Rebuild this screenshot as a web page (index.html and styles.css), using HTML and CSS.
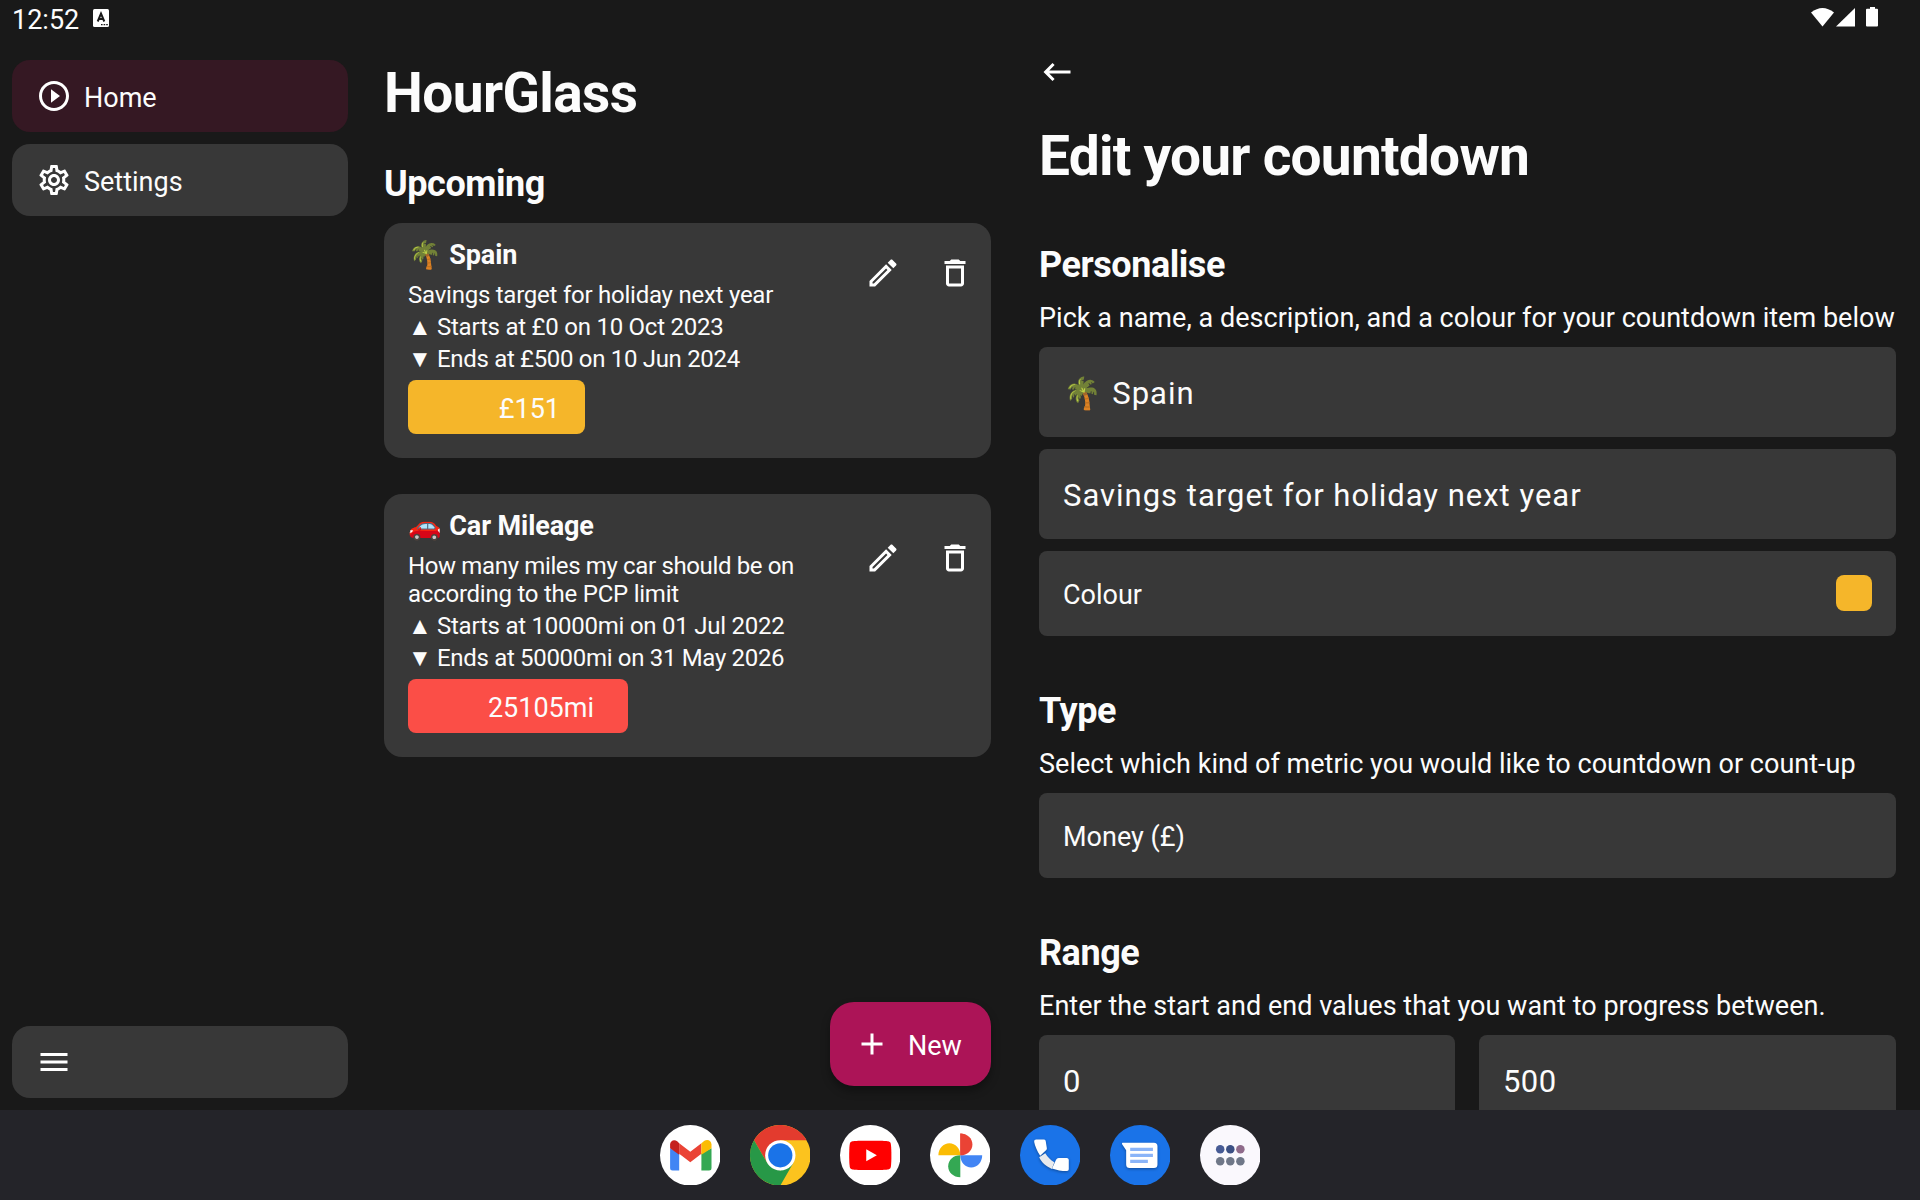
FILE: index.html
```html
<!DOCTYPE html>
<html lang="en">
<head>
<meta charset="utf-8">
<title>HourGlass</title>
<link rel="stylesheet" href="styles.css">
</head>
<body>
<div class="screen">
  <header class="status">
    <span class="clock">12:52</span>
    <svg class="status-app" width="16" height="18" viewBox="0 0 16 18"><rect width="16" height="18" rx="1.5" fill="#fff"/><path d="M4.7 12.5 8 4.600l3.300 7.900M5.800 10h4.400" fill="none" stroke="#191919" stroke-width="2"/><path d="M8 15.600h1.600m1 0h1.600m1 0h1.600" stroke="#191919" stroke-width="1.400"/></svg>
    <svg class="status-tray" width="68" height="22" viewBox="0 0 68 22" fill="#fff"><path d="M0 5.500Q11.500-3.500 23 5.500L11.500 19.500z"/><path d="M44 1v18.500H25z"/><path d="M59 0h5v1.800h2a1 1 0 0 1 1 1v15.700a1 1 0 0 1-1 1H56a1 1 0 0 1-1-1V2.800a1 1 0 0 1 1-1h3z"/></svg>
  </header>

  <div class="app">
    <nav class="sidebar">
      <a class="nav-item active"><svg class="icon" viewBox="0 0 24 24"><path d="M10 16.500l6-4.500-6-4.500v9zM12 2C6.480 2 2 6.480 2 12s4.480 10 10 10 10-4.480 10-10S17.520 2 12 2zm0 18c-4.410 0-8-3.590-8-8s3.590-8 8-8 8 3.590 8 8-3.590 8-8 8z"/></svg><span>Home</span></a>
      <a class="nav-item"><svg class="icon" viewBox="0 0 24 24"><path d="M19.430 12.980c.04-.32.07-.64.07-.98s-.03-.66-.07-.98l2.110-1.650c.19-.15.24-.42.12-.64l-2-3.460c-.09-.16-.26-.25-.44-.25-.06 0-.12.010-.17.030l-2.490 1c-.52-.4-1.080-.73-1.690-.98l-.38-2.650C14.460 2.180 14.250 2 14 2h-4c-.25 0-.46.180-.49.420l-.38 2.650c-.61.250-1.170.590-1.690.980l-2.490-1c-.06-.02-.12-.03-.18-.03-.17 0-.34.090-.43.250l-2 3.460c-.13.220-.07.490.120.640l2.110 1.650c-.04.320-.07.650-.07.980s.03.660.070.980l-2.110 1.650c-.19.150-.24.420-.12.640l2 3.460c.09.160.260.250.440.250.060 0 .120-.01.170-.03l2.490-1c.52.400 1.080.730 1.690.980l.38 2.650c.03.240.240.420.490.420h4c.25 0 .46-.18.490-.42l.38-2.650c.61-.25 1.170-.59 1.690-.98l2.490 1c.06.020.120.030.180.030.170 0 .340-.09.430-.25l2-3.460c.12-.22.070-.49-.12-.64l-2.110-1.650zm-1.980-1.710c.04.310.050.520.050.730s-.02.430-.05.730l-.14 1.130.890.700 1.080.840-.7 1.210-1.270-.51-1.040-.42-.9.680c-.43.320-.84.560-1.250.730l-1.060.430-.16 1.130-.2 1.350h-1.400l-.19-1.350-.16-1.130-1.060-.43c-.43-.18-.83-.41-1.230-.71l-.91-.7-1.060.430-1.270.510-.7-1.210 1.080-.84.890-.7-.14-1.130c-.03-.31-.05-.54-.05-.74s.02-.43.050-.73l.14-1.130-.89-.7-1.080-.84.700-1.210 1.270.510 1.040.420.900-.68c.43-.32.840-.56 1.250-.73l1.060-.43.160-1.130.2-1.350h1.390l.19 1.350.16 1.130 1.060.430c.43.180.830.410 1.230.710l.91.700 1.060-.43 1.270-.51.700 1.210-1.070.850-.89.700.14 1.130zM12 8c-2.210 0-4 1.790-4 4s1.790 4 4 4 4-1.790 4-4-1.790-4-4-4zm0 6c-1.100 0-2-.9-2-2s.9-2 2-2 2 .9 2 2-.9 2-2 2z"/></svg><span>Settings</span></a>
      <a class="nav-item menu"><svg class="icon" viewBox="0 0 24 24"><path d="M3 18h18v-2H3v2zm0-5h18v-2H3v2zm0-7v2h18V6H3z"/></svg></a>
    </nav>

    <main class="list">
      <h1>HourGlass</h1>
      <h2>Upcoming</h2>
      <article class="card">
        <div class="card-head">
          <div class="card-text">
            <h3><span class="emoji">🌴</span> Spain</h3>
            <p>Savings target for holiday next year</p>
          </div>
          <div class="actions">
            <svg class="icon" viewBox="0 0 24 24"><path d="M14.060 9.020l.92.920L5.920 19H5v-.92l9.060-9.060M17.660 3c-.25 0-.51.100-.7.290l-1.830 1.830 3.750 3.750 1.830-1.830c.39-.39.390-1.020 0-1.410l-2.340-2.340c-.2-.2-.45-.29-.71-.29zm-3.600 3.190L3 17.250V21h3.750L17.810 9.940l-3.750-3.750z"/></svg>
            <svg class="icon" viewBox="0 0 24 24"><path d="M16 9v10H8V9h8m-1.500-6h-5l-1 1H5v2h14V4h-3.500l-1-1zM18 7H6v12c0 1.100.900 2 2 2h8c1.100 0 2-.9 2-2V7z"/></svg>
          </div>
        </div>
        <p class="range"><span class="tri">▲</span>Starts at £0 on 10 Oct 2023</p>
        <p class="range end"><span class="tri">▼</span>Ends at £500 on 10 Jun 2024</p>
        <div class="bar amber">£151</div>
      </article>
      <article class="card">
        <div class="card-head">
          <div class="card-text">
            <h3><span class="emoji">🚗</span> Car Mileage</h3>
            <p class="long">How many miles my car should be on according to the PCP limit</p>
          </div>
          <div class="actions">
            <svg class="icon" viewBox="0 0 24 24"><path d="M14.060 9.020l.92.920L5.920 19H5v-.92l9.060-9.060M17.660 3c-.25 0-.51.100-.7.290l-1.830 1.830 3.750 3.750 1.830-1.830c.39-.39.390-1.020 0-1.410l-2.340-2.340c-.2-.2-.45-.29-.71-.29zm-3.600 3.190L3 17.250V21h3.750L17.810 9.940l-3.750-3.750z"/></svg>
            <svg class="icon" viewBox="0 0 24 24"><path d="M16 9v10H8V9h8m-1.500-6h-5l-1 1H5v2h14V4h-3.500l-1-1zM18 7H6v12c0 1.100.900 2 2 2h8c1.100 0 2-.9 2-2V7z"/></svg>
          </div>
        </div>
        <p class="range"><span class="tri">▲</span>Starts at 10000mi on 01 Jul 2022</p>
        <p class="range end"><span class="tri">▼</span>Ends at 50000mi on 31 May 2026</p>
        <div class="bar red">25105mi</div>
      </article>
      <button class="fab"><svg class="icon" viewBox="0 0 24 24"><path d="M19 13h-6v6h-2v-6H5v-2h6V5h2v6h6v2z"/></svg><span>New</span></button>
    </main>

    <section class="editor">
      <svg class="icon back" viewBox="0 0 24 24"><path d="M21 11H6.830l3.580-3.590L9 6l-6 6 6 6 1.410-1.410L6.830 13H21z"/></svg>
      <h1>Edit your countdown</h1>
      <h2>Personalise</h2>
      <p class="hint">Pick a name, a description, and a colour for your countdown item below</p>
      <div class="fields">
        <div class="field"><span class="emoji">🌴</span>&nbsp;Spain</div>
        <div class="field">Savings target for holiday next year</div>
        <div class="field option">Colour<span class="swatch"></span></div>
      </div>
      <h2>Type</h2>
      <p class="hint">Select which kind of metric you would like to countdown or count-up</p>
      <div class="fields"><div class="field option">Money (£)</div></div>
      <h2>Range</h2>
      <p class="hint">Enter the start and end values that you want to progress between.</p>
      <div class="fields pair"><div class="field number">0</div><div class="field number">500</div></div>
    </section>
  </div>

  <footer class="dock">
    <svg viewBox="0 0 60 60"><circle cx="30" cy="30" r="30" fill="#fff"/><path d="M10 23v19.500a2.500 2.500 0 0 0 2.500 2.500H19V28z" fill="#4285f4"/><path d="M41 28v17h7.500a2.500 2.500 0 0 0 2.500-2.500V23z" fill="#34a853"/><path d="M19 18l11 8.500L41 18v10.500L30 37l-11-8.500z" fill="#ea4335"/><path d="M41 18l3-2.300c3-2.100 7-.2 7 3.600V23l-10 6.500z" fill="#fbbc04"/><path d="M19 18l-2-2c-3-2.300-7-.500-7 3.300V23l9 6.500z" fill="#c5221f"/></svg>
    <svg viewBox="0 0 60 60"><circle cx="30" cy="30" r="30" fill="#fcc31e"/><path d="M30 30V15h26A30 30 0 0 0 4 15l13 22.500z" fill="#e33b2e"/><path d="M4 15a30 30 0 0 0 26 45l13-22.500-13 7.500-13-7.500z" fill="#279847"/><circle cx="30" cy="30" r="15" fill="#fff"/><circle cx="30" cy="30" r="12" fill="#1a73e8"/></svg>
    <svg viewBox="0 0 60 60"><circle cx="30" cy="30" r="30" fill="#fff"/><path d="M30 15.500c17 0 19 .200 20 2 1.200 2.300 1.200 22.700 0 25-1 1.800-3 2-20 2s-19-.200-20-2c-1.200-2.300-1.200-22.700 0-25 1-1.800 3-2 20-2z" fill="#f00"/><path d="M26 24v12l10.500-6z" fill="#fff"/></svg>
    <svg viewBox="0 0 60 60"><circle cx="30" cy="30" r="30" fill="#fff"/><path d="M30 8.300c5 0 8.500 4.900 8.500 10.900S35 30 30 30z" fill="#ea4335" transform="translate(0 0)"/><path d="M8.300 30c0-7 4.900-12 10.900-12S30 23 30 30z" fill="#fbbc04"/><path d="M30 30v21.700c-7 0-12-4.900-12-10.900S23 30 30 30z" fill="#34a853"/><path d="M30 30h21.700c0 7-4.900 12-10.900 12S30 37 30 30z" fill="#4285f4"/><path d="M30 8.300c7 0 12 4.900 12 10.900S37 30 30 30z" fill="#ea4335"/></svg>
    <svg viewBox="0 0 60 60"><circle cx="30" cy="30" r="30" fill="#1a73e8"/><g class="lift"><path d="M19 32l6-4c2.500 4 5 6.500 9 9l-2.500 6.500C26 41 21.500 37.500 19 32z" fill="#e8eaed"/><path d="M16 14.300h7.500a2 2 0 0 1 1.900 1.400l1.200 7.300a2 2 0 0 1-.6 1.700L20 30.500c-3-4.800-5.300-10-6-14a2 2 0 0 1 2-2.200z" fill="#fff"/><path d="M31.700 43l4-8.500a3 3 0 0 1 2.600-1.800h8a2 2 0 0 1 2 1.700v9.400a1.800 1.800 0 0 1-1.900 1.800c-5.400-.100-10-.900-14.700-2.600z" fill="#fff"/></g></svg>
    <svg viewBox="0 0 60 60"><circle cx="30" cy="30" r="30" fill="#1a73e8"/><path class="lift" d="M13 17.500h30.500a3.500 3.500 0 0 1 3.500 3.500v18a3.500 3.500 0 0 1-3.500 3.500h-24A3.500 3.500 0 0 1 16 39V25l-4-6c-.5-.8 0-1.500 1-1.500z" fill="#fff"/><path d="M20 24.200h22.500M20 30h22.500M20 36h17.500" stroke="#8ab4f8" stroke-width="3.200"/></svg>
    <svg viewBox="0 0 60 60"><circle cx="30" cy="30" r="30" fill="#faf8fd"/><g fill="#6f7788"><circle cx="20" cy="24" r="4.200" fill="#475b95"/><circle cx="30" cy="24" r="4.200" fill="#3c5084"/><circle cx="40" cy="24" r="4.200" fill="#8f6b8b"/><circle cx="20" cy="36" r="4.200"/><circle cx="30" cy="36" r="4.200"/><circle cx="40" cy="36" r="4.200"/></g></svg>
  </footer>
</div>
</body>
</html>
```
FILE: styles.css
```css
* { box-sizing: border-box; margin: 0; padding: 0; }
body { background: #191919; color: #fcfcfc; font-family: Roboto, "Noto Color Emoji", sans-serif; }
.screen { width: 1920px; height: 1200px; display: flex; flex-direction: column; overflow: hidden; }

.status { height: 36px; flex: none; display: flex; align-items: flex-start; padding: 0 41px 0 12px; }
.clock { font-size: 27px; line-height: 41px; width: 81px; }
.status-app { margin-top: 9px; }
.status-tray { margin: 7px 0 0 auto; }

.app { flex: 1; min-height: 0; display: flex; }
.icon { width: 36px; height: 36px; flex: none; fill: #fff; }

.sidebar { width: 348px; padding: 24px 0 12px 12px; display: flex; flex-direction: column; gap: 12px; }
.nav-item { height: 72px; border-radius: 18px; background: #383838; display: flex; align-items: center; gap: 12px; padding: 0 24px; font-size: 27px; line-height: 36px; }
.nav-item span, .fab span { padding-top: 3px; }
.nav-item.active { background: #351823; }
.nav-item.menu { margin-top: auto; }

h1 { font-size: 55px; line-height: 64px; font-weight: 700; letter-spacing: -0.6px; white-space: nowrap; }
h2 { font-size: 36px; line-height: 42px; font-weight: 700; letter-spacing: -0.45px; }
h3 { font-size: 27px; line-height: 32px; font-weight: 700; letter-spacing: -0.1px; }
h3 .emoji { margin-right: 1px; letter-spacing: 0; }

.list { width: 607px; margin-left: 36px; padding: 25px 0 24px; display: flex; flex-direction: column; }
.list h2 { margin: 38px 0 18px; }
.card { background: #383838; border-radius: 18px; padding: 16px 18px 24px 24px; margin-bottom: 36px; font-size: 24px; line-height: 28px; }
.card p { letter-spacing: -0.24px; }
.card p.long { letter-spacing: -0.24px; }
.card p.long::first-line { letter-spacing: -0.36px; }
.card p.end { letter-spacing: -0.32px; }
.card-head { display: flex; align-items: center; }
.card-text { flex: 1; }
.card-text p { margin-top: 10px; width: 410px; }
.actions { display: flex; gap: 36px; margin-bottom: 2px; }
.range { margin-top: 4px; display: flex; }
.tri { width: 29px; font-size: 24px; }
.bar { height: 54px; margin-top: 7px; border-radius: 8px; font-size: 27px; line-height: 58px; text-align: right; }
.amber { background: #f5b62a; width: 177px; padding-right: 25px; }
.red { background: #fb4e47; width: 220px; padding-right: 34px; }
.fab { margin: auto 0 0 auto; width: 161px; height: 84px; border: 0; border-radius: 24px; background: #ac1457; color: #fff; font: 400 27px/36px Roboto, sans-serif; display: flex; align-items: center; gap: 18px; padding-left: 24px; box-shadow: 0 5px 9px rgba(0,0,0,.35); }

.editor { width: 857px; margin-left: 48px; padding-top: 18px; display: flex; flex-direction: column; overflow: hidden; }
.editor h1 { margin-top: 34px; letter-spacing: -0.75px; }
.editor h2 { margin-top: 54px; }
.editor h1 + h2 { margin-top: 56px; }
.hint { margin: 16px 0 13px; font-size: 27px; line-height: 32px; letter-spacing: 0.03px; white-space: nowrap; }
.fields { display: flex; flex-direction: column; gap: 12px; }
.field { height: 90px; flex: none; border-radius: 8px; background: #383838; padding: 2px 24px 0; display: flex; align-items: center; font-size: 31px; letter-spacing: 1px; }
.field .emoji { margin-right: 1px; }
.field.option { height: 85px; font-size: 27px; letter-spacing: 0; justify-content: space-between; }
.swatch { width: 36px; height: 36px; border-radius: 8px; background: #f5b62a; margin-top: -3px; }
.fields.pair { display: grid; grid-template-columns: 416px 417px; gap: 24px; }
.field.number { letter-spacing: 0.4px; }

.dock { height: 90px; flex: none; background: #242429; display: flex; justify-content: center; align-items: center; gap: 29.400px; }
.dock svg { width: 60.600px; height: 60.600px; }
.lift { filter: drop-shadow(0 1.500px 1.500px rgba(0,0,0,.35)); }
```
